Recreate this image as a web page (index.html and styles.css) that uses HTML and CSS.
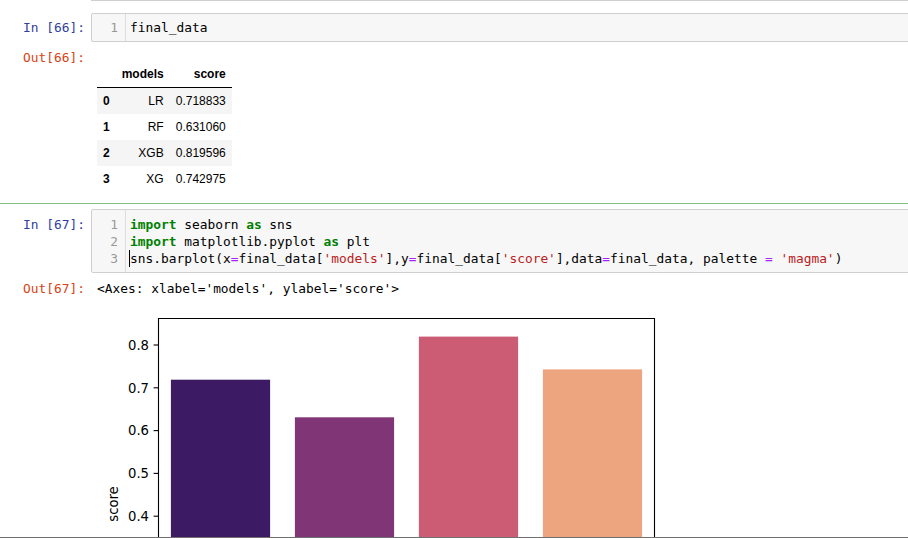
FILE: index.html
```html
<!DOCTYPE html>
<html>
<head>
<meta charset="utf-8">
<link rel="stylesheet" href="styles.css">
</head>
<body>
<div class="nb">
  <div class="prev-end"></div>

  <div class="cell c1">
    <div class="row">
      <div class="prompt in-p">In&nbsp;[66]:</div>
      <div class="input">
        <div class="gutter"><div>1</div></div>
        <div class="code"><div class="ln">final_data</div></div>
      </div>
    </div>
    <div class="row out">
      <div class="prompt out-p">Out[66]:</div>
      <div class="out-content">
        <table class="df">
          <thead>
            <tr><th></th><th>models</th><th>score</th></tr>
          </thead>
          <tbody>
            <tr><th>0</th><td>LR</td><td>0.718833</td></tr>
            <tr><th>1</th><td>RF</td><td>0.631060</td></tr>
            <tr><th>2</th><td>XGB</td><td>0.819596</td></tr>
            <tr><th>3</th><td>XG</td><td>0.742975</td></tr>
          </tbody>
        </table>
      </div>
    </div>
  </div>

  <div class="cell c2">
    <div class="row">
      <div class="prompt in-p">In&nbsp;[67]:</div>
      <div class="input">
        <div class="gutter"><div>1</div><div>2</div><div>3</div></div>
        <div class="code">
          <div class="ln"><span class="kw">import</span> seaborn <span class="kw">as</span> sns</div>
          <div class="ln"><span class="kw">import</span> matplotlib.pyplot <span class="kw">as</span> plt</div>
          <div class="ln"><span class="cursor"></span>sns.barplot(x<span class="op">=</span>final_data[<span class="str">'models'</span>],y<span class="op">=</span>final_data[<span class="str">'score'</span>],data<span class="op">=</span>final_data, palette <span class="op">=</span> <span class="str">'magma'</span>)</div>
        </div>
      </div>
    </div>
    <div class="row out">
      <div class="prompt out-p">Out[67]:</div>
      <div class="out-content">
        <div class="repr">&lt;Axes: xlabel='models', ylabel='score'&gt;</div>
        <svg class="chart" width="570" height="241" viewBox="0 0 570 241">
          <rect x="73.9" y="82.7" width="99.2" height="300" fill="#3c1b64"/>
          <rect x="197.9" y="120.3" width="99.2" height="300" fill="#803577"/>
          <rect x="321.9" y="39.6" width="99.2" height="300" fill="#cb5c73"/>
          <rect x="445.9" y="72.4" width="99.2" height="300" fill="#eca57f"/>
          <path d="M61.5 260 V21.5 H557.5 V260" fill="none" stroke="#000" stroke-width="1.1"/>
          <g stroke="#000" stroke-width="1.1">
            <line x1="56.6" y1="48" x2="61.5" y2="48"/>
            <line x1="56.6" y1="90.8" x2="61.5" y2="90.8"/>
            <line x1="56.6" y1="133.6" x2="61.5" y2="133.6"/>
            <line x1="56.6" y1="176.4" x2="61.5" y2="176.4"/>
            <line x1="56.6" y1="219.2" x2="61.5" y2="219.2"/>
          </g>
          <g class="ticklbl" text-anchor="end">
            <text x="52" y="52.8">0.8</text>
            <text x="52" y="95.6">0.7</text>
            <text x="52" y="138.4">0.6</text>
            <text x="52" y="181.2">0.5</text>
            <text x="52" y="224">0.4</text>
          </g>
          <text class="ticklbl" text-anchor="middle" transform="translate(21 207) rotate(-90)">score</text>
        </svg>
      </div>
    </div>
  </div>
</div>
<div class="frame-edge"></div>
</body>
</html>
```

FILE: styles.css
```css
html, body {
  margin: 0;
  padding: 0;
  background: #fff;
  height: 538px;
  overflow: hidden;
}

.nb {
  width: 980px;
}

.prev-end {
  margin-left: 91px;
  height: 0;
  border-top: 1px solid #cfcfcf;
}

.cell {
  display: flex;
  flex-direction: column;
}

.c1 {
  padding-top: 12px;
}

.c2 {
  margin-top: 11px;
  border-top: 1px solid #7fbf82;
  padding-top: 5px;
}

.row {
  display: flex;
  align-items: flex-start;
}

.prompt {
  width: 91px;
  flex: none;
  box-sizing: border-box;
  padding-right: 6px;
  text-align: right;
  font-family: "DejaVu Sans Mono", monospace;
  font-size: 12.87px;
  line-height: 17px;
  white-space: nowrap;
}

.in-p {
  color: #303f9f;
}

.c1 .in-p {
  padding-top: 6px;
}

.c2 .in-p {
  padding-top: 7px;
}

.out-p {
  color: #d84315;
}

.input {
  flex: 1;
  display: flex;
  background: #f7f7f7;
  border: 1px solid #cfcfcf;
  border-radius: 2px;
  font-family: "DejaVu Sans Mono", monospace;
  font-size: 12.87px;
  line-height: 17px;
}

.gutter {
  width: 34px;
  flex: none;
  box-sizing: border-box;
  border-right: 1px solid #dddddd;
  padding-right: 7px;
  text-align: right;
  color: #999999;
}

.code {
  flex: 1;
  padding-left: 4px;
  color: #000;
}

.ln {
  white-space: pre;
  height: 17px;
}

.c1 .gutter,
.c1 .code {
  padding-top: 5px;
  padding-bottom: 5px;
}

.c2 .gutter,
.c2 .code {
  padding-top: 6px;
  padding-bottom: 5px;
}

.kw {
  color: #008000;
  font-weight: bold;
}

.str {
  color: #ba2121;
}

.op {
  color: #aa22ff;
}

.cursor {
  display: inline-block;
  width: 0;
  height: 17px;
  vertical-align: top;
  border-left: 1px solid #000;
  margin-left: -1px;
}

.out {
  margin-top: 7px;
}

.out-content {
  padding-left: 6px;
}

.c1 .out-content {
  padding-top: 12px;
}

.df {
  border-collapse: separate;
  border-spacing: 0;
  font-family: "Liberation Sans", Arial, sans-serif;
  font-size: 12px;
  color: #000;
}

.df th,
.df td {
  height: 26px;
  padding: 0 6px;
  line-height: 26px;
  text-align: right;
  box-sizing: border-box;
}

.df thead th {
  font-weight: bold;
  border-bottom: 1px solid #000;
  height: 27px;
}

.df tbody th {
  font-weight: bold;
}

.df tbody tr:nth-child(odd) {
  background: #f5f5f5;
}

.repr {
  font-family: "DejaVu Sans Mono", monospace;
  font-size: 12.87px;
  line-height: 17px;
  color: #000;
  white-space: pre;
}

.chart {
  display: block;
}

.ticklbl {
  font-family: "DejaVu Sans", sans-serif;
  font-size: 13.2px;
  fill: #000;
}

.frame-edge {
  position: fixed;
  left: 0;
  right: 0;
  bottom: 0;
  height: 1px;
  background: #707070;
}
```
